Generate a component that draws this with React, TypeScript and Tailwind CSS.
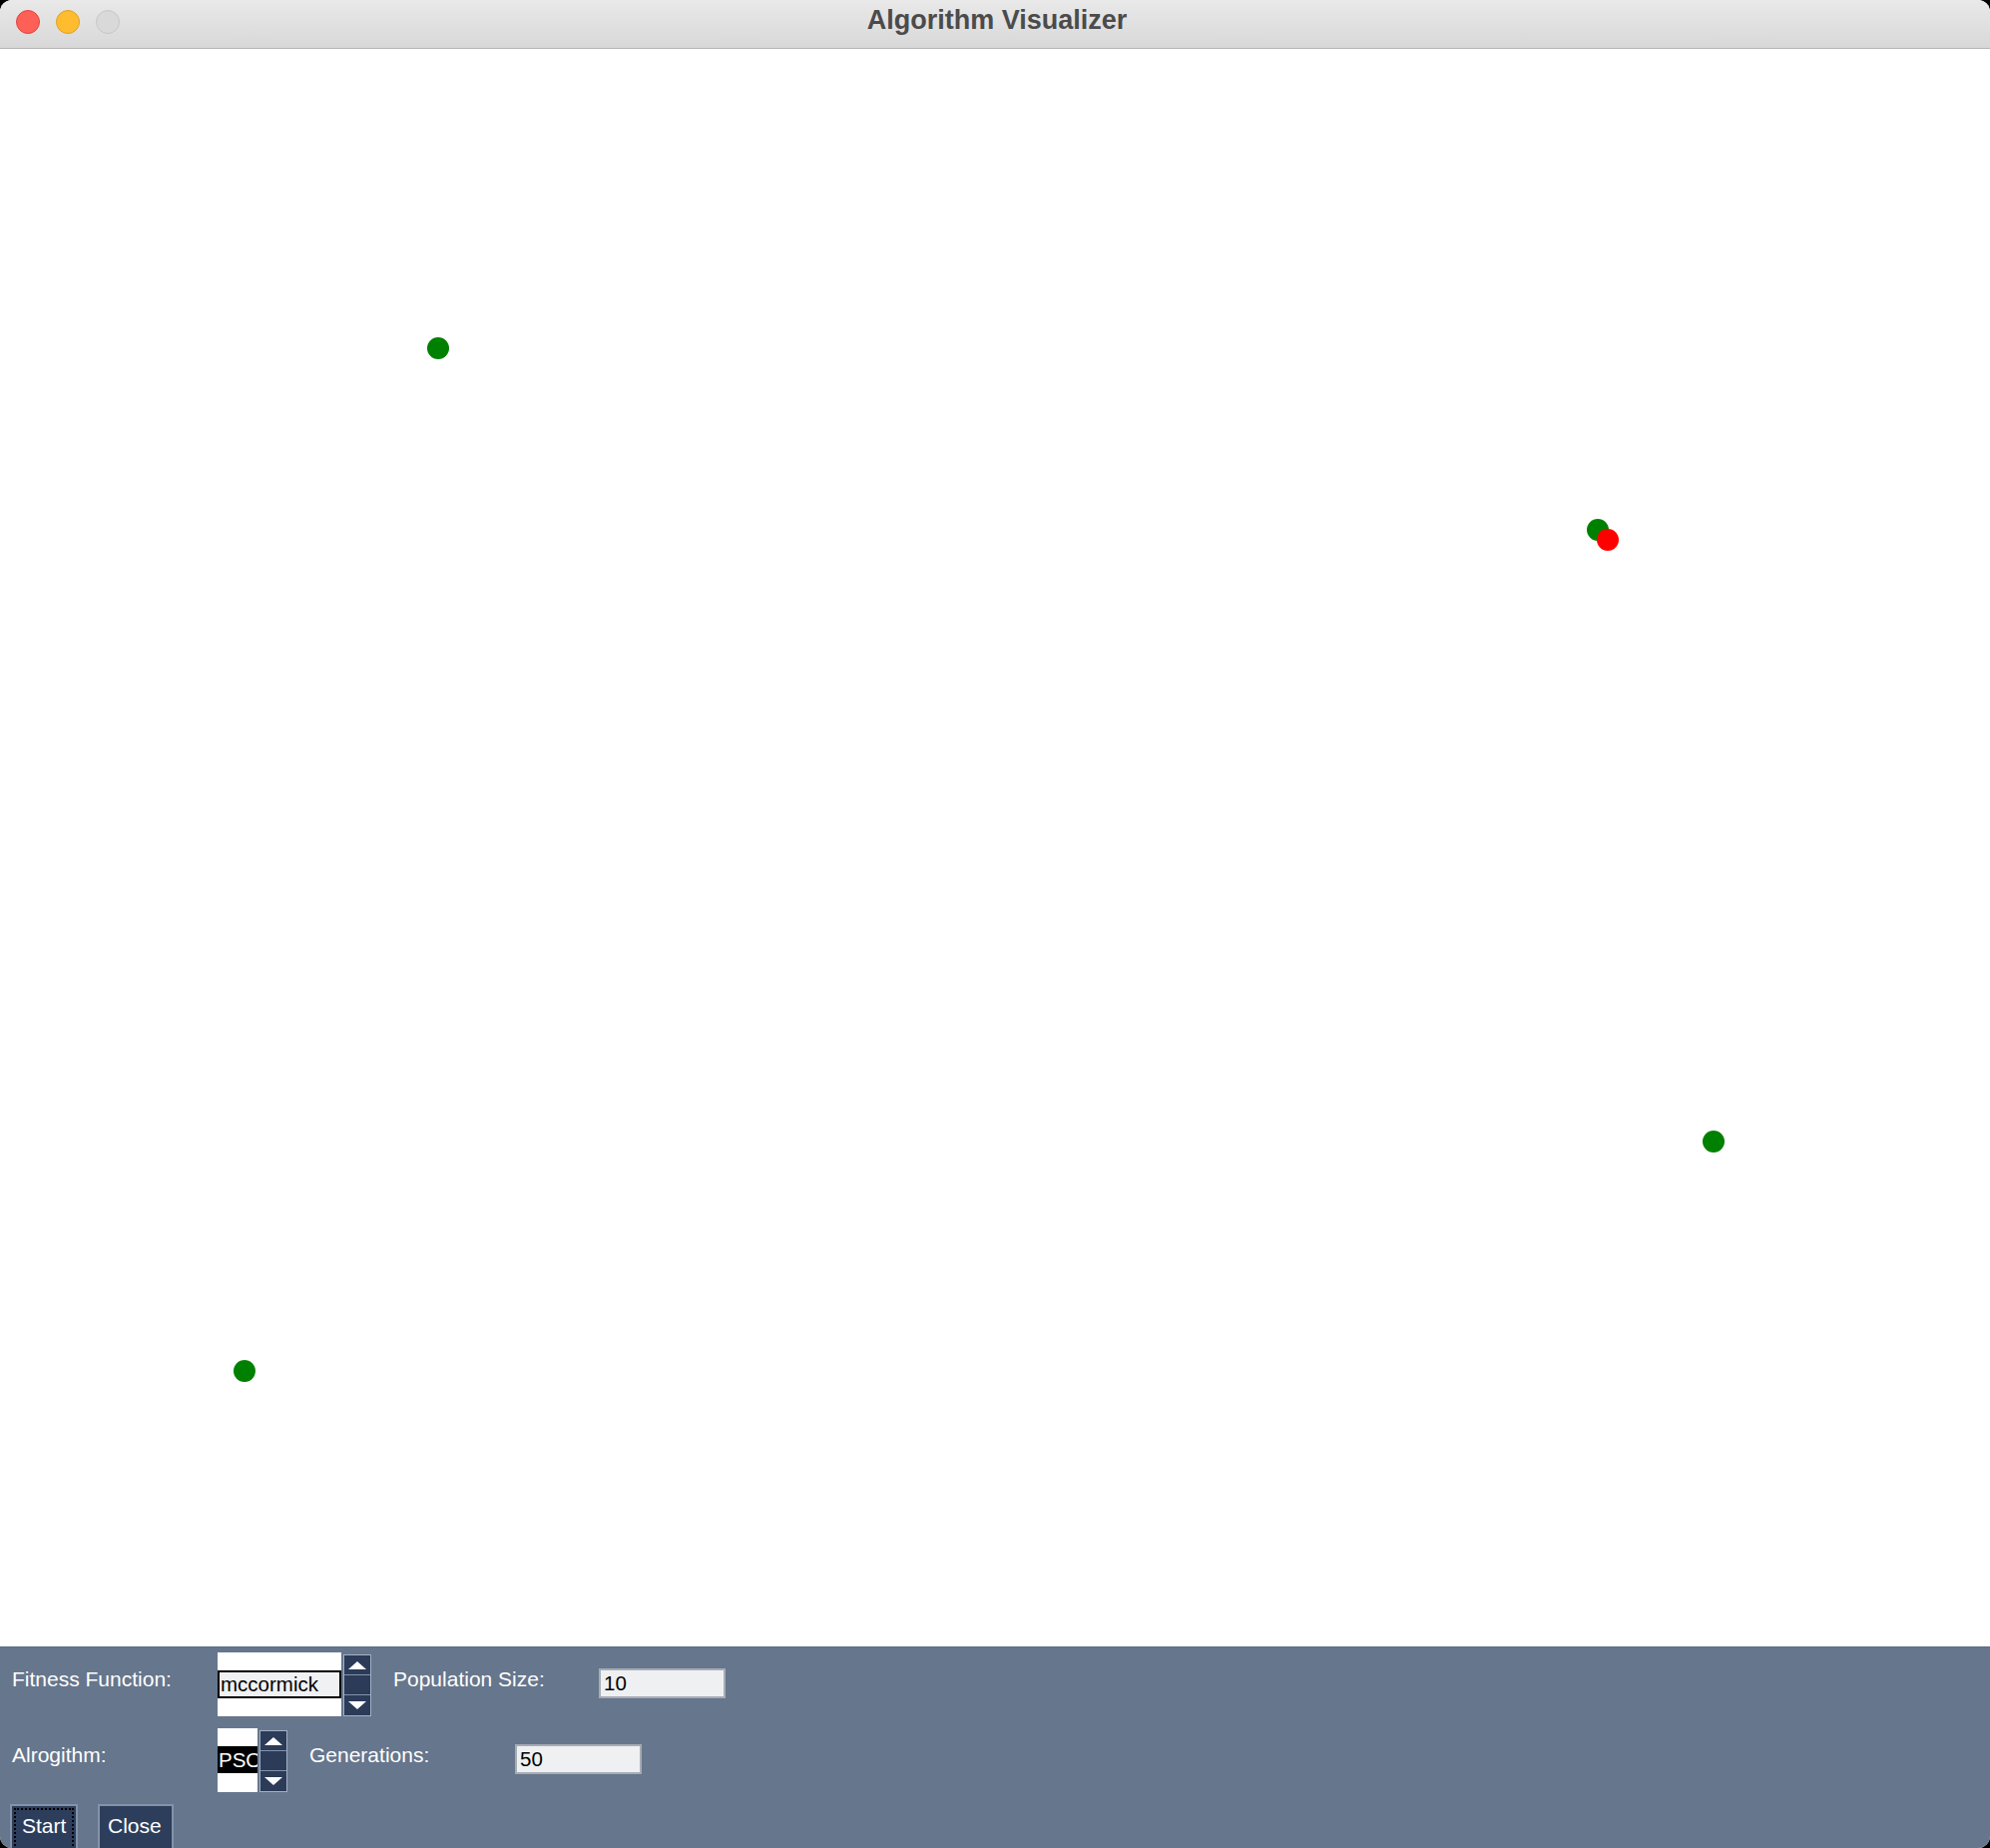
import React from 'react'

const dots = [
  { x: 428, y: 289, color: 'bg-[#008000]' },
  { x: 1590, y: 471, color: 'bg-[#008000]' },
  { x: 1600, y: 481, color: 'bg-[#ff0000]' },
  { x: 1706, y: 1084, color: 'bg-[#008000]' },
  { x: 234, y: 1314, color: 'bg-[#008000]' },
]

function SpinButtons() {
  return (
    <div className="flex flex-col w-[28px] h-[62px] border border-[#a3b1c6] bg-[#2b3b58]">
      <div className="h-[20px] flex items-center justify-center border-b border-[#8393aa]">
        <div className="w-0 h-0 border-l-[9px] border-r-[9px] border-b-[8px] border-l-transparent border-r-transparent border-b-white" />
      </div>
      <div className="h-[20px] border-b border-[#8393aa]" />
      <div className="flex-1 flex items-center justify-center">
        <div className="w-0 h-0 border-l-[9px] border-r-[9px] border-t-[8px] border-l-transparent border-r-transparent border-t-white" />
      </div>
    </div>
  )
}

function Label({ text }: { text: string }) {
  return (
    <div className="w-[206px] pt-[15px] text-[21px] leading-[24px] text-white">{text}</div>
  )
}

function Entry({ value }: { value: string }) {
  return (
    <div className="mt-[16px] w-[127px] h-[30px] bg-[#eef0f2] border-2 border-[#a7acb4] pl-[3px] text-[20.5px] leading-[26px] text-black">
      {value}
    </div>
  )
}

export default function App() {
  return (
    <div className="w-[1994px] h-[1852px] bg-black" style={{ fontFamily: '"Liberation Sans", Arial, sans-serif' }}>
      <div className="w-full h-full rounded-[12px] overflow-hidden flex flex-col bg-white">
        {/* title bar */}
        <div className="relative h-[49px] shrink-0 bg-gradient-to-b from-[#e9e9e9] to-[#d8d8d8] border-b border-[#b5b5b5]">
          <div className="absolute left-[16px] top-[10px] flex gap-[16px]">
            <div className="w-[24px] h-[24px] rounded-full bg-[#fe5f57] border border-[#e0443e]" />
            <div className="w-[24px] h-[24px] rounded-full bg-[#febc2e] border border-[#dea123]" />
            <div className="w-[24px] h-[24px] rounded-full bg-[#d9d9d9] border border-[#c6c6c6]" />
          </div>
          <div className="pt-[5px] pl-[4px] text-center text-[27px] leading-[30px] font-bold text-[#4b4b4b]">
            Algorithm Visualizer
          </div>
        </div>

        {/* canvas */}
        <div className="relative flex-1 bg-white">
          {dots.map((d, i) => (
            <div
              key={i}
              className={`absolute w-[22px] h-[22px] rounded-full ${d.color}`}
              style={{ left: d.x, top: d.y }}
            />
          ))}
        </div>

        {/* controls */}
        <div className="h-[202px] shrink-0 overflow-hidden bg-[#66768c] border-t border-[#5c6d84] pt-[5px] flex flex-col gap-[12px]">
          <div className="flex h-[64px] pl-[12px]">
            <Label text="Fitness Function:" />
            <div className="w-[124px] h-[64px] bg-white pt-[18px]">
              <div className="h-[28px] bg-[#f0f1f3] border-2 border-black pl-[1px] text-[20.5px] leading-[24px] text-black">
                mccormick
              </div>
            </div>
            <div className="ml-[2px] mt-[2px]">
              <SpinButtons />
            </div>
            <div className="ml-[22px] flex">
              <Label text="Population Size:" />
              <Entry value="10" />
            </div>
          </div>

          <div className="flex h-[64px] pl-[12px]">
            <Label text="Alrogithm:" />
            <div className="w-[40px] h-[64px] bg-white pt-[18px] overflow-hidden">
              <div className="h-[27px] bg-black pl-[1px] text-[20.5px] leading-[27px] text-white whitespace-nowrap">
                PSO
              </div>
            </div>
            <div className="ml-[2px] mt-[2px]">
              <SpinButtons />
            </div>
            <div className="ml-[22px] flex">
              <Label text="Generations:" />
              <Entry value="50" />
            </div>
          </div>

          <div className="flex gap-[20px] pl-[10px]">
            <button className="w-[68px] h-[50px] bg-[#2d3e5c] border-2 border-[#8393aa] p-[2px]">
              <div className="w-full h-full border-2 border-dotted border-black flex items-center pl-[6px] text-[21px] text-white pb-[6px]">
                Start
              </div>
            </button>
            <button className="w-[76px] h-[50px] bg-[#2d3e5c] border-2 border-[#8393aa] flex items-center pl-[8px] text-[21px] text-white pb-[6px]">
              Close
            </button>
          </div>
        </div>
      </div>
    </div>
  )
}
